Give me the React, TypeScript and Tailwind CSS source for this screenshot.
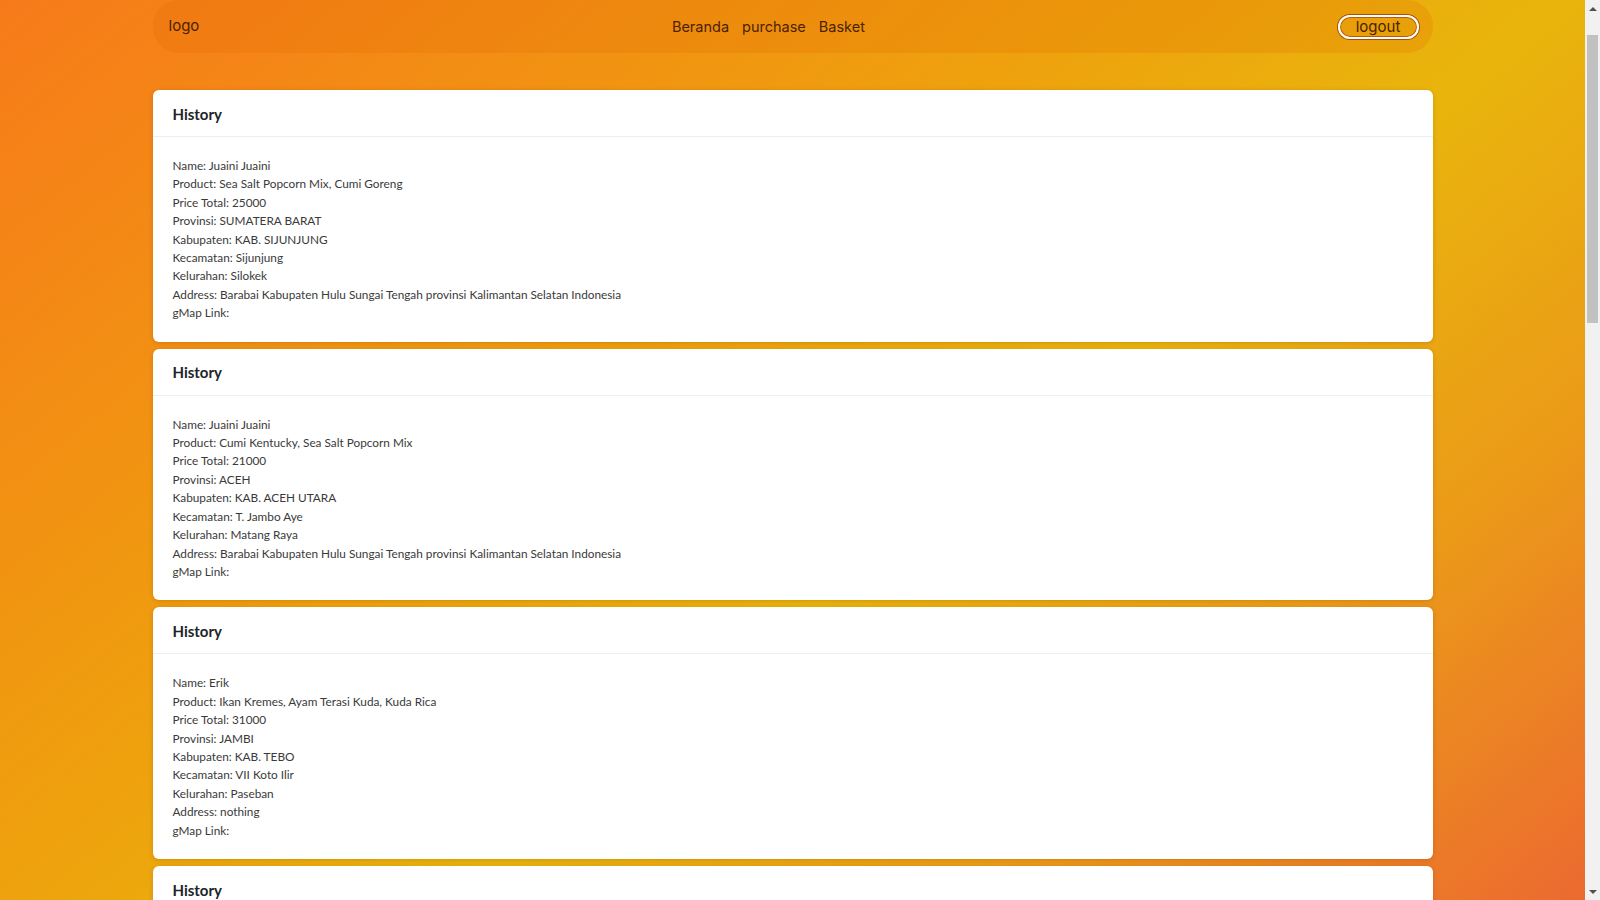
import React from "react";

type Order = {
  name: string;
  product: string;
  total: number;
  provinsi: string;
  kabupaten: string;
  kecamatan: string;
  kelurahan: string;
  address: string;
  gmap: string;
};

const orders: Order[] = [
  {
    name: "Juaini Juaini",
    product: "Sea Salt Popcorn Mix, Cumi Goreng",
    total: 25000,
    provinsi: "SUMATERA BARAT",
    kabupaten: "KAB. SIJUNJUNG",
    kecamatan: "Sijunjung",
    kelurahan: "Silokek",
    address: "Barabai Kabupaten Hulu Sungai Tengah provinsi Kalimantan Selatan Indonesia",
    gmap: "",
  },
  {
    name: "Juaini Juaini",
    product: "Cumi Kentucky, Sea Salt Popcorn Mix",
    total: 21000,
    provinsi: "ACEH",
    kabupaten: "KAB. ACEH UTARA",
    kecamatan: "T. Jambo Aye",
    kelurahan: "Matang Raya",
    address: "Barabai Kabupaten Hulu Sungai Tengah provinsi Kalimantan Selatan Indonesia",
    gmap: "",
  },
  {
    name: "Erik",
    product: "Ikan Kremes, Ayam Terasi Kuda, Kuda Rica",
    total: 31000,
    provinsi: "JAMBI",
    kabupaten: "KAB. TEBO",
    kecamatan: "VII Koto Ilir",
    kelurahan: "Paseban",
    address: "nothing",
    gmap: "",
  },
  {
    name: "Erik",
    product: "Cumi Goreng",
    total: 12000,
    provinsi: "BALI",
    kabupaten: "KAB. BADUNG",
    kecamatan: "Kuta",
    kelurahan: "Legian",
    address: "nothing",
    gmap: "",
  },
];

function Navbar() {
  return (
    <nav className="flex h-[53px] shrink-0 items-center justify-between rounded-[26px] bg-[#e06400]/20 pl-4 pr-[14px] font-['Inter',sans-serif] text-[14.5px] text-[#4a2200]">
      <a className="text-[15px]">logo</a>
      <ul className="flex items-center gap-[13px]">
        <li>Beranda</li>
        <li>purchase</li>
        <li>Basket</li>
      </ul>
      <button className="h-6 w-[81px] rounded-full border-2 border-white text-[15px] leading-none text-[#4a2200] ring-1 ring-[#a4500f] shadow-[inset_0_0_0_1px_#b85a12]">
        logout
      </button>
    </nav>
  );
}

function HistoryCard({ o }: { o: Order }) {
  return (
    <div className="mb-[7px] shrink-0 rounded-md bg-white font-['Lato',sans-serif] shadow-[0_1px_4px_rgba(120,60,0,0.25)]">
      <div className="flex h-[47px] items-center border-b border-[#eeeeee] px-5 pt-[2px] text-[15px] font-bold text-[#212529]">
        History
      </div>
      <div className="px-5 pt-5 pb-[19px] text-[11.8px] leading-[18.4px] text-[#3a3a3a]">
        <p>Name: {o.name}</p>
        <p>Product: {o.product}</p>
        <p>Price Total: {o.total}</p>
        <p>Provinsi: {o.provinsi}</p>
        <p>Kabupaten: {o.kabupaten}</p>
        <p>Kecamatan: {o.kecamatan}</p>
        <p>Kelurahan: {o.kelurahan}</p>
        <p>Address: {o.address}</p>
        <p>gMap Link: {o.gmap}</p>
      </div>
    </div>
  );
}

// browser scrollbar as seen in the screenshot
function Scrollbar() {
  return (
    <div className="flex w-[15px] shrink-0 flex-col items-center bg-[#f1f1f1]">
      <div className="flex h-[17px] items-center justify-center">
        <div className="h-0 w-0 border-x-[4px] border-b-[4px] border-x-transparent border-b-[#505050]" />
      </div>
      <div className="h-[18px]" />
      <div className="h-[288px] w-[11px] bg-[#c1c1c1]" />
      <div className="flex-1" />
      <div className="flex h-[17px] items-center justify-center">
        <div className="h-0 w-0 border-x-[4px] border-t-[4px] border-x-transparent border-t-[#505050]" />
      </div>
    </div>
  );
}

export default function App() {
  return (
    <div className="flex h-screen overflow-hidden">
      <div className="flex-1 overflow-hidden bg-[linear-gradient(141deg,#f77a1a_0%,#eea20d_41%,#e9b50c_58%,#eb9a18_78%,#ec6a30_100%)]">
        <div className="mx-auto flex h-full max-w-7xl flex-col">
          <Navbar />
          <main className="flex flex-col pt-[37px]">
            {orders.map((o, i) => (
              <HistoryCard key={i} o={o} />
            ))}
          </main>
        </div>
      </div>
      <Scrollbar />
    </div>
  );
}
